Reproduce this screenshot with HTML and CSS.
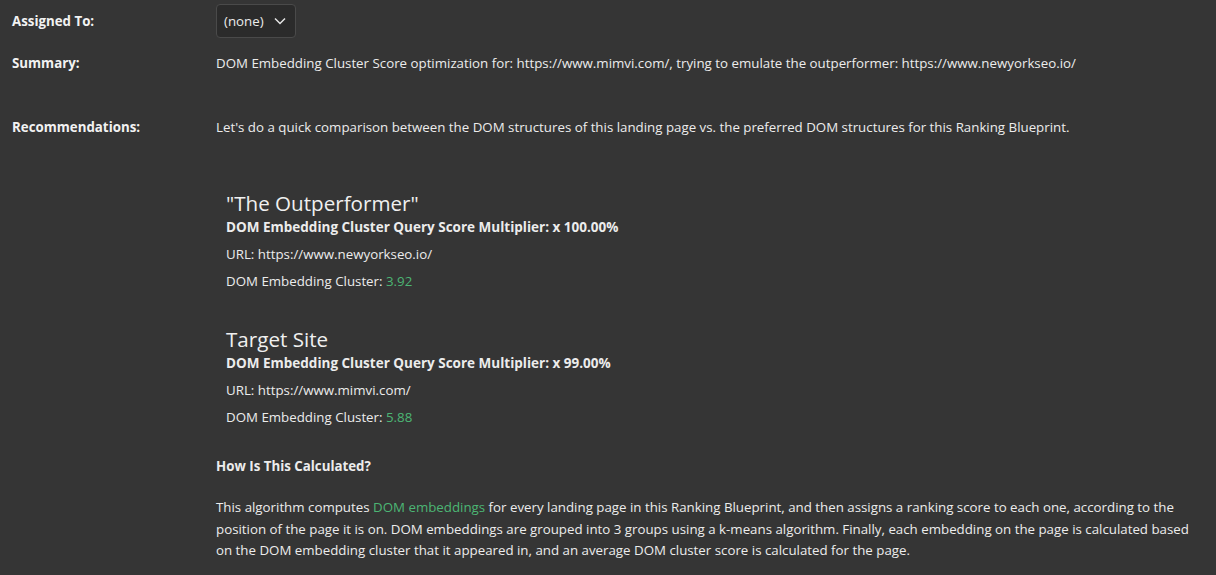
FILE: index.html
```html
<!DOCTYPE html>
<html>
<head>
<meta charset="utf-8">
<link rel="stylesheet" href="styles.css">
</head>
<body>
<div class="page">
  <div class="row row-assigned">
    <div class="label">Assigned To:</div>
    <div class="value">
      <div class="select">
        <span>(none)</span>
        <svg class="chev" width="12" height="8" viewBox="0 0 12 8"><path d="M1 1.5 L6 6.5 L11 1.5" fill="none" stroke="#e6e6e6" stroke-width="1.5"/></svg>
      </div>
    </div>
  </div>
  <div class="row row-summary">
    <div class="label">Summary:</div>
    <div class="value">DOM Embedding Cluster Score optimization for: https://www.mimvi.com/, trying to emulate the outperformer: https://www.newyorkseo.io/</div>
  </div>
  <div class="row row-rec">
    <div class="label">Recommendations:</div>
    <div class="value">
      <p class="intro">Let's do a quick comparison between the DOM structures of this landing page vs. the preferred DOM structures for this Ranking Blueprint.</p>
      <div class="site site-first">
        <h2 class="site-title">"The Outperformer"</h2>
        <div class="mult">DOM Embedding Cluster Query Score Multiplier: x 100.00%</div>
        <div class="line">URL: https://www.newyorkseo.io/</div>
        <div class="line">DOM Embedding Cluster: <span class="green">3.92</span></div>
      </div>
      <div class="site site-second">
        <h2 class="site-title">Target Site</h2>
        <div class="mult">DOM Embedding Cluster Query Score Multiplier: x 99.00%</div>
        <div class="line">URL: https://www.mimvi.com/</div>
        <div class="line">DOM Embedding Cluster: <span class="green">5.88</span></div>
      </div>
      <h3 class="how">How Is This Calculated?</h3>
      <p class="para">This algorithm computes <span class="green">DOM embeddings</span> for every landing page in this Ranking Blueprint, and then assigns a ranking score to each one, according to the position of the page it is on. DOM embeddings are grouped into 3 groups using a k-means algorithm. Finally, each embedding on the page is calculated based on the DOM embedding cluster that it appeared in, and an average DOM cluster score is calculated for the page.</p>
    </div>
  </div>
</div>
</body>
</html>
```

FILE: styles.css
```css
html, body {
  margin: 0;
  padding: 0;
  background: #353535;
}
body {
  font-family: "Open Sans", "Noto Sans", sans-serif;
  font-size: 13.3px;
  color: #ececec;
  line-height: 20px;
}
.page {
  padding: 4px 14px 0 12px;
}
.row {
  display: flex;
  align-items: flex-start;
}
.label {
  width: 204px;
  flex: none;
  font-weight: 700;
  color: #f2f2f2;
}
.value {
  flex: 1;
  min-width: 0;
}
.row-assigned {
  align-items: center;
  height: 34px;
}
.select {
  display: inline-flex;
  align-items: center;
  gap: 10px;
  height: 32px;
  padding: 0 9px 0 7px;
  background: #2b2b2b;
  border: 1px solid #4a4a4a;
  border-radius: 4px;
  box-sizing: content-box;
}
.chev { display: block; }
.row-summary {
  margin-top: 15px;
}
.row-rec {
  margin-top: 44px;
}
.intro {
  margin: 0;
}
.site {
  padding-left: 10px;
}
.site-first { margin-top: 53px; }
.site-second { margin-top: 35px; }
.site-title {
  margin: 0;
  font-size: 20.6px;
  font-weight: 400;
  line-height: 26px;
  color: #f0f0f0;
}
.mult {
  font-weight: 700;
  font-size: 13.5px;
  margin-top: 1px;
}
.line {
  margin-top: 7px;
}
.green {
  color: #4cb574;
}
.how {
  margin: 29px 0 0 0;
  font-size: 13.3px;
  font-weight: 700;
  line-height: 20px;
}
.para {
  margin: 21px 0 0 0;
  line-height: 21.5px;
}
```
